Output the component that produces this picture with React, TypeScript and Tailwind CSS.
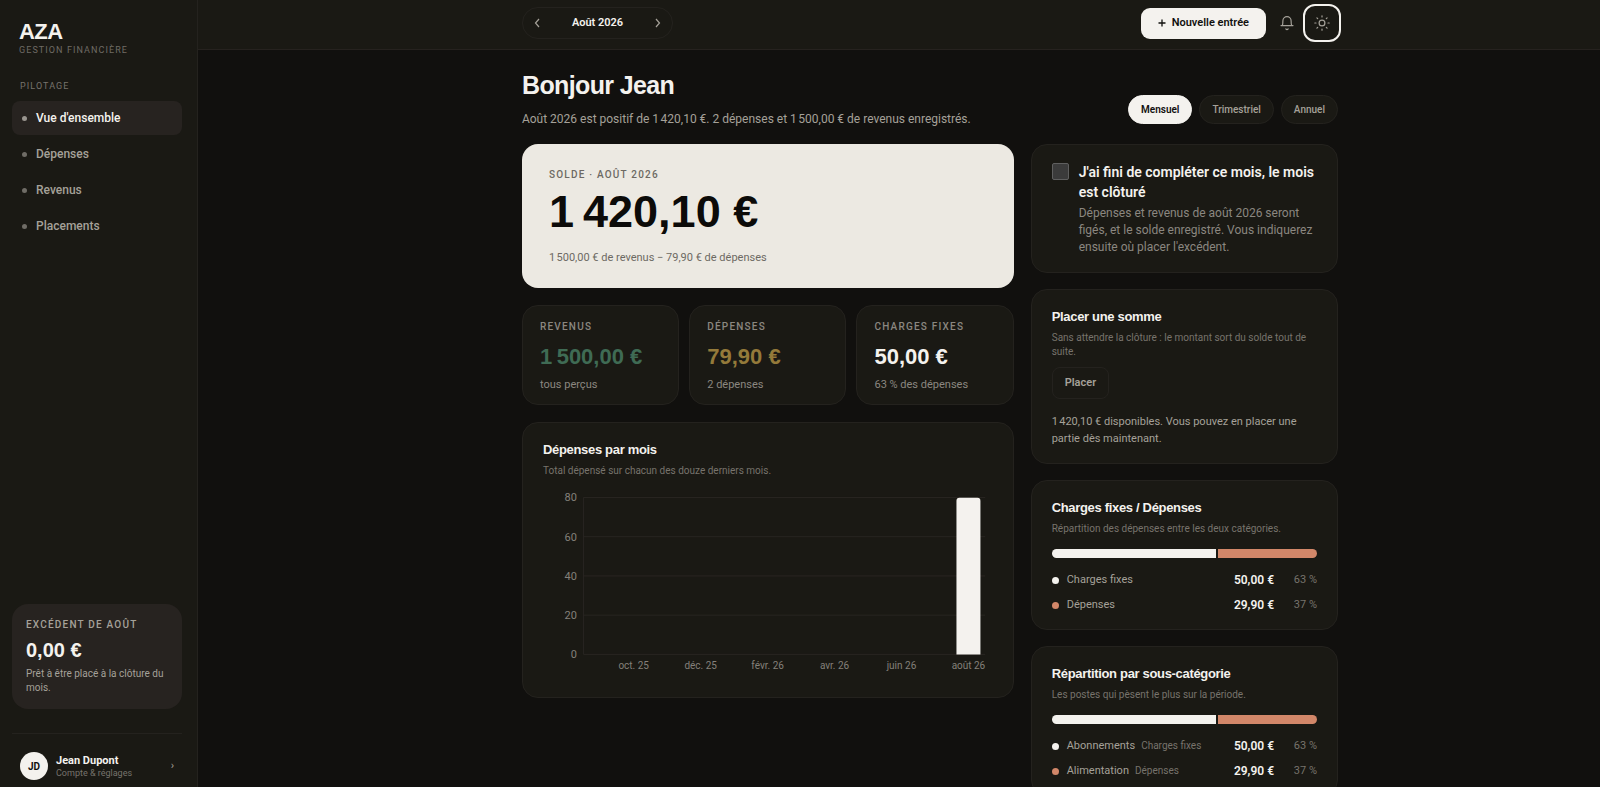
import type { ReactNode } from "react";

const navList = ["Vue d'ensemble", "Dépenses", "Revenus", "Placements"];

const periodList = ["Mensuel", "Trimestriel", "Annuel"];

const balance = "1\u202f420,10\u00a0€";
const income = "1\u202f500,00\u00a0€";

const statList = [
  { label: "Revenus", value: income, note: "tous perçus", color: "text-[#3f6b54]" },
  { label: "Dépenses", value: "79,90\u00a0€", note: "2 dépenses", color: "text-[#947a3a]" },
  { label: "Charges fixes", value: "50,00\u00a0€", note: "63\u00a0% des dépenses", color: "text-[#f4f2ee]" },
];

const months = [
  { label: "sept. 25", total: 0 },
  { label: "oct. 25", total: 0 },
  { label: "nov. 25", total: 0 },
  { label: "déc. 25", total: 0 },
  { label: "janv. 26", total: 0 },
  { label: "févr. 26", total: 0 },
  { label: "mars 26", total: 0 },
  { label: "avr. 26", total: 0 },
  { label: "mai 26", total: 0 },
  { label: "juin 26", total: 0 },
  { label: "juil. 26", total: 0 },
  { label: "août 26", total: 79.9 },
];

type Share = { label: string; parent?: string; amount: number; fill: string };

const categoryList: Share[] = [
  { label: "Charges fixes", amount: 50, fill: "bg-[#f4f2ee]" },
  { label: "Dépenses", amount: 29.9, fill: "bg-[#d28769]" },
];

const subCategoryList: Share[] = [
  { label: "Abonnements", parent: "Charges fixes", amount: 50, fill: "bg-[#f4f2ee]" },
  { label: "Alimentation", parent: "Dépenses", amount: 29.9, fill: "bg-[#d28769]" },
];

function Card({ title, subtitle, children }: { title: string; subtitle: string; children: ReactNode }) {
  return (
    <section className="rounded-2xl border border-[#24221e] bg-[#1a1914] px-5 pt-[18px] pb-4">
      <h2 className="font-['Liberation_Sans',sans-serif] text-[13px] leading-[18px] font-bold tracking-tight text-[#f4f2ee]">
        {title}
      </h2>
      <p className="mt-[5px] text-[10px] leading-[14px] text-[#77736c]">{subtitle}</p>
      {children}
    </section>
  );
}

function Chart() {
  const top = 16.5;
  const bottom = 173.5;
  const left = 40.5;
  const step = 33.5;
  const y = (v: number) => bottom - (v / 80) * (bottom - top);

  return (
    <svg viewBox="0 0 450 196" className="mt-[3px] mb-1 w-full" role="img" aria-label="Dépenses par mois">
      {[0, 20, 40, 60, 80].map((tick) => (
        <g key={tick}>
          <line x1={left} x2={left + step * 12} y1={y(tick)} y2={y(tick)} stroke="#282521" />
          <text x="34" y={y(tick) + 4} textAnchor="end" fontSize="11" fill="#84807a">
            {tick}
          </text>
        </g>
      ))}
      <line x1={left} x2={left} y1={top} y2={bottom} stroke="#282521" />
      {months.map((month, i) => {
        const center = left + step * (i + 0.5);
        return (
          <g key={month.label}>
            {month.total > 0 && (
              <path
                d={`M${center - 12} ${bottom}V${y(month.total) + 3}q0-3 3-3h18q3 0 3 3V${bottom}z`}
                fill="#f4f2ee"
              />
            )}
            {i % 2 === 1 && (
              <text x={center} y="188" textAnchor="middle" fontSize="10" fill="#84807a">
                {month.label}
              </text>
            )}
          </g>
        );
      })}
    </svg>
  );
}

function Breakdown({ list }: { list: Share[] }) {
  const total = list.reduce((sum, item) => sum + item.amount, 0);

  return (
    <>
      <div className="mt-[13px] flex h-[9px] gap-0.5 overflow-hidden rounded-full">
        {list.map((item) => (
          <div key={item.label} className={item.fill} style={{ width: `${(item.amount / total) * 100}%` }} />
        ))}
      </div>
      <ul className="mt-3.5 flex flex-col gap-[9px]">
        {list.map((item) => (
          <li key={item.label} className="flex items-center text-[11px] leading-4 text-[#a5a199]">
            <span className={`mr-2 size-[7px] rounded-full ${item.fill}`} />
            <span>{item.label}</span>
            {item.parent && <span className="ml-1.5 text-[10px] text-[#77736c]">{item.parent}</span>}
            <span className="ml-auto text-xs leading-4 font-semibold text-[#f4f2ee]">
              {item.amount.toFixed(2).replace(".", ",")}&nbsp;€
            </span>
            <span className="w-[43px] text-right text-[#77736c]">
              {Math.round((item.amount / total) * 100)}&nbsp;%
            </span>
          </li>
        ))}
      </ul>
    </>
  );
}

function Sidebar() {
  return (
    <aside className="flex w-[198px] shrink-0 flex-col border-r border-[#24221e] bg-[#1a1914] pt-5 pr-[15px] pb-[7px] pl-3">
      <div className="px-[7px]">
        <p className="font-['Liberation_Sans',sans-serif] text-[22px] leading-6 font-bold tracking-tight text-[#f4f2ee]">
          AZA
        </p>
        <p className="text-[9px] leading-3 tracking-[0.12em] text-[#6f6b64] uppercase">Gestion financière</p>
      </div>
      <p className="mt-6 px-2 text-[9px] leading-3 tracking-[0.12em] text-[#77736c] uppercase">Pilotage</p>
      <nav className="mt-[9px] flex flex-col gap-0.5">
        {navList.map((item, i) => (
          <a
            key={item}
            href="#"
            className={`flex h-[34px] items-center gap-[9px] rounded-lg px-2.5 text-xs font-medium ${
              i === 0 ? "bg-[#272320] text-[#f4f2ee]" : "text-[#a5a199]"
            }`}
          >
            <span className={`size-[5px] rounded-full ${i === 0 ? "bg-[#99958f]" : "bg-[#6f6c66]"}`} />
            {item}
          </a>
        ))}
      </nav>

      <div className="mt-auto rounded-2xl bg-[#272320] px-3.5 pt-3.5 pb-3.5">
        <p className="text-[10px] leading-[14px] font-medium tracking-[0.12em] text-[#a5a199] uppercase">
          Excédent de août
        </p>
        <p className="mt-1.5 font-['Liberation_Sans',sans-serif] text-xl leading-6 font-bold text-[#f4f2ee]">
          0,00&nbsp;€
        </p>
        <p className="mt-[5px] text-[10px] leading-[14px] text-[#a5a199]">
          Prêt à être placé à la clôture du mois.
        </p>
      </div>
      <div className="mt-6 border-t border-[#24221e] pt-[18px]">
        <a href="#" className="flex items-center gap-2 px-2">
          <span className="flex size-7 items-center justify-center rounded-full bg-[#f4f2ee] text-[10px] font-bold text-[#11100e]">
            JD
          </span>
          <span>
            <span className="block text-[11px] leading-[13px] font-bold text-[#f4f2ee]">Jean Dupont</span>
            <span className="block text-[9px] leading-3 text-[#77736c]">Compte &amp; réglages</span>
          </span>
          <span className="ml-auto text-[11px] text-[#a5a199]">›</span>
        </a>
      </div>
    </aside>
  );
}

function Topbar() {
  return (
    <header className="shrink-0 border-b border-[#26221f] bg-[#1a1914]">
      <div className="mx-auto flex h-[49px] max-w-[878px] items-center pb-[3px] pl-[62px]">
        <div className="flex h-8 w-[151px] items-center justify-between rounded-full border border-[#24221e] px-2">
          <button aria-label="Mois précédent" className="p-0.5 text-[#a5a199]">
            <svg viewBox="0 0 10 10" className="size-2.5" fill="none" stroke="currentColor" strokeWidth="1.2">
              <path d="M6 1 2.500 5 6 9" />
            </svg>
          </button>
          <span className="text-[11px] leading-4 font-semibold text-[#f4f2ee]">Août 2026</span>
          <button aria-label="Mois suivant" className="p-0.5 text-[#a5a199]">
            <svg viewBox="0 0 10 10" className="size-2.5" fill="none" stroke="currentColor" strokeWidth="1.2">
              <path d="M4 1 7.500 5 4 9" />
            </svg>
          </button>
        </div>
        <button className="ml-auto flex h-[31px] items-center gap-1.5 rounded-[9px] bg-[#f4f2ee] px-[17px] text-[11px] font-semibold text-[#11100e]">
          <svg viewBox="0 0 8 8" className="size-2" stroke="currentColor" strokeWidth="1.3">
            <path d="M4 .5v7M.5 4h7" />
          </svg>
          Nouvelle entrée
        </button>
        <button aria-label="Notifications" className="mr-2.5 ml-3 p-0.5 text-[#a5a199]">
          <svg viewBox="0 0 14 16" className="h-4 w-3.5" fill="none" stroke="currentColor" strokeWidth="1.2">
            <path
              d="M1 10.600h12M2.200 10.600c.6-1 .7-2 .7-4.900a4.100 4.100 0 0 1 8.200 0c0 2.900.1 3.900.7 4.900"
              strokeLinecap="round"
              strokeLinejoin="round"
            />
            <path d="M5.800 13.900q1.200 1.300 2.400 0" strokeLinecap="round" />
          </svg>
        </button>
        <button
          aria-label="Changer de thème"
          className="flex size-8 items-center justify-center rounded-[9px] text-[#a5a199] outline-2 outline-offset-1 outline-[#f4f2ee]"
        >
          <svg viewBox="0 0 16 16" className="size-4" fill="none" stroke="currentColor" strokeWidth="1.2" strokeLinecap="round">
            <circle cx="8" cy="8" r="2.900" />
            <path d="M8 .8v1.200M8 14v1.200M.8 8H2M14 8h1.200M2.900 2.900l.8.8M12.300 12.300l.8.8M2.900 13.100l.8-.8M12.300 3.700l.8-.8" />
          </svg>
        </button>
      </div>
    </header>
  );
}

export default function App() {
  return (
    <div className="flex h-screen overflow-hidden bg-[#11100e] font-['Roboto',sans-serif] text-[#a5a199]">
      <Sidebar />
      <div className="flex min-w-0 flex-1 flex-col">
        <Topbar />
        <main className="flex-1 overflow-y-auto [scrollbar-width:none]">
          <div className="mx-auto max-w-[878px] pt-[19px] pb-8 pl-[62px]">
            <div className="flex items-end justify-between">
              <div>
                <h1 className="font-['Liberation_Sans',sans-serif] text-[25px] leading-8 font-bold tracking-tight text-[#f4f2ee]">
                  Bonjour Jean
                </h1>
                <p className="mt-[9px] text-xs leading-[18px]">
                  {`Août 2026 est positif de ${balance}. 2 dépenses et ${income} de revenus enregistrés.`}
                </p>
              </div>
              <div className="mb-1 flex gap-[7px]">
                {periodList.map((period, i) => (
                  <button
                    key={period}
                    className={`h-[29px] rounded-full border px-3 text-[10px] ${
                      i === 0
                        ? "border-[#f4f2ee] bg-[#f4f2ee] font-semibold text-[#11100e]"
                        : "border-[#24221e] bg-[#1a1914] font-medium text-[#a5a199]"
                    }`}
                  >
                    {period}
                  </button>
                ))}
              </div>
            </div>

            <div className="mt-4 grid grid-cols-[1.6fr_1fr] items-start gap-[17px]">
              <div className="flex flex-col gap-[17px]">
                <section className="rounded-2xl bg-[#ece9e2] px-[27px] pt-6 pb-[22px]">
                  <p className="text-[10px] leading-[14px] font-medium tracking-[0.12em] text-[#6d6963] uppercase">
                    Solde · Août 2026
                  </p>
                  <p className="mt-2 font-['Liberation_Sans',sans-serif] text-[45px] leading-11 font-bold text-[#0c0b09]">
                    {balance}
                  </p>
                  <p className="mt-4 text-[11px] leading-4 text-[#6d6963]">
                    {`${income} de revenus − 79,90\u00a0€ de dépenses`}
                  </p>
                </section>

                <div className="grid grid-cols-3 gap-2.5">
                  {statList.map((stat) => (
                    <section
                      key={stat.label}
                      className="rounded-2xl border border-[#24221e] bg-[#1a1914] px-[17px] pt-3.5 pb-3"
                    >
                      <p className="text-[10px] leading-[14px] font-medium tracking-[0.12em] text-[#8b8780] uppercase">
                        {stat.label}
                      </p>
                      <p
                        className={`mt-[11px] font-['Liberation_Sans',sans-serif] text-[22px] leading-6 font-bold ${stat.color}`}
                      >
                        {stat.value}
                      </p>
                      <p className="mt-[9px] text-[11px] leading-[14px] text-[#8b8780]">{stat.note}</p>
                    </section>
                  ))}
                </div>

                <Card title="Dépenses par mois" subtitle="Total dépensé sur chacun des douze derniers mois.">
                  <Chart />
                </Card>
              </div>

              <div className="flex flex-col gap-4">
                <label className="flex gap-2.5 rounded-2xl border border-[#24221e] bg-[#1a1914] px-5 pt-[17px] pb-4">
                  <input
                    type="checkbox"
                    className="mt-px size-[17px] shrink-0 appearance-none rounded-xs border border-[#5f5f5f] bg-[#3b3b3b]"
                  />
                  <span>
                    <span className="block text-sm leading-5 font-semibold text-[#f4f2ee]">
                      J'ai fini de compléter ce mois, le mois est clôturé
                    </span>
                    <span className="mt-[3px] block text-xs leading-[17px] text-[#8b8780]">
                      Dépenses et revenus de août 2026 seront figés, et le solde enregistré. Vous indiquerez
                      ensuite où placer l'excédent.
                    </span>
                  </span>
                </label>

                <Card
                  title="Placer une somme"
                  subtitle="Sans attendre la clôture : le montant sort du solde tout de suite."
                >
                  <button className="mt-2 h-8 rounded-lg border border-[#24221e] px-3 text-[11px] font-semibold text-[#a5a199]">
                    Placer
                  </button>
                  <p className="mt-3.5 text-[11px] leading-[17px]">
                    {`${balance} disponibles. Vous pouvez en placer une partie dès maintenant.`}
                  </p>
                </Card>

                <Card title="Charges fixes / Dépenses" subtitle="Répartition des dépenses entre les deux catégories.">
                  <Breakdown list={categoryList} />
                </Card>

                <Card title="Répartition par sous-catégorie" subtitle="Les postes qui pèsent le plus sur la période.">
                  <Breakdown list={subCategoryList} />
                </Card>
              </div>
            </div>
          </div>
        </main>
      </div>
    </div>
  );
}
